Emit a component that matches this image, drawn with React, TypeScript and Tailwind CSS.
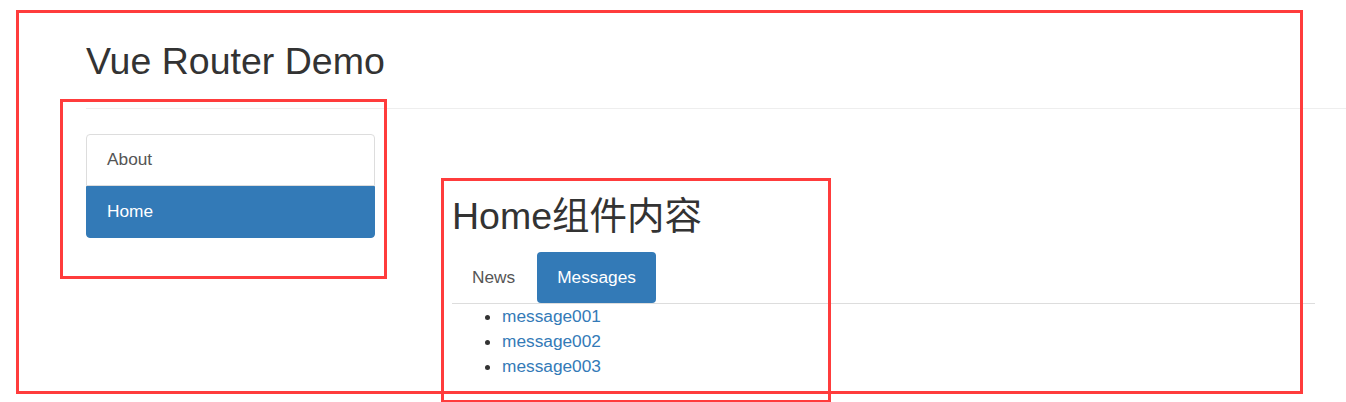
import React from "react";

export default function App() {
  return (
    <div className="relative w-[1346px] h-[402px] overflow-hidden bg-white font-['Liberation_Sans','Noto_Sans_CJK_SC',sans-serif] text-[#333]">
      {/* Header */}
      <div className="ml-[86px] h-[109px] pt-[41px] border-b border-[#eee]">
        <h2 className="text-[37.5px] leading-[41px] font-normal text-[#333] m-0 whitespace-nowrap">Vue Router Demo</h2>
      </div>

      {/* Body */}
      <div className="flex ml-[86px] pt-[25px]">
        {/* Left nav list */}
        <div className="w-[289px] shrink-0 flex flex-col">
          <div className="h-[52px] flex items-center pl-5 border border-[#ddd] rounded-t text-[17.3px] text-[#555] bg-white">
            About
          </div>
          <div className="h-[52px] flex items-center pl-5 border border-[#337ab7] bg-[#337ab7] rounded-b text-[17.3px] text-white">
            Home
          </div>
        </div>

        {/* Right content */}
        <div className="ml-[77px] w-[863px] flex flex-col">
          <h2 className="mt-[62px] text-[37.5px] leading-[41px] h-[41px] font-normal text-[#333] whitespace-nowrap">
            Home组件内容
          </h2>
          <div className="mt-[15px] flex border-b border-[#ddd]">
            <div className="h-[51px] px-5 mr-[2px] flex items-center text-[17.3px] text-[#555]">News</div>
            <div className="h-[51px] px-5 flex items-center text-[17.3px] text-white bg-[#337ab7] rounded">Messages</div>
          </div>
          <ul className="list-disc pl-[50px] text-[17.3px] leading-[25px] text-[#333]">
            <li><span className="text-[#337ab7]">message001</span></li>
            <li><span className="text-[#337ab7]">message002</span></li>
            <li><span className="text-[#337ab7]">message003</span></li>
          </ul>
        </div>
      </div>

      {/* Red annotation boxes */}
      <div className="absolute left-[16px] top-[10px] w-[1287px] h-[384px] border-[3px] border-[#ff3c3c] pointer-events-none" />
      <div className="absolute left-[60px] top-[99px] w-[327px] h-[180px] border-[3px] border-[#ff3c3c] pointer-events-none" />
      <div className="absolute left-[441px] top-[178px] w-[390px] h-[225px] border-[3px] border-[#ff3c3c] pointer-events-none" />
    </div>
  );
}
